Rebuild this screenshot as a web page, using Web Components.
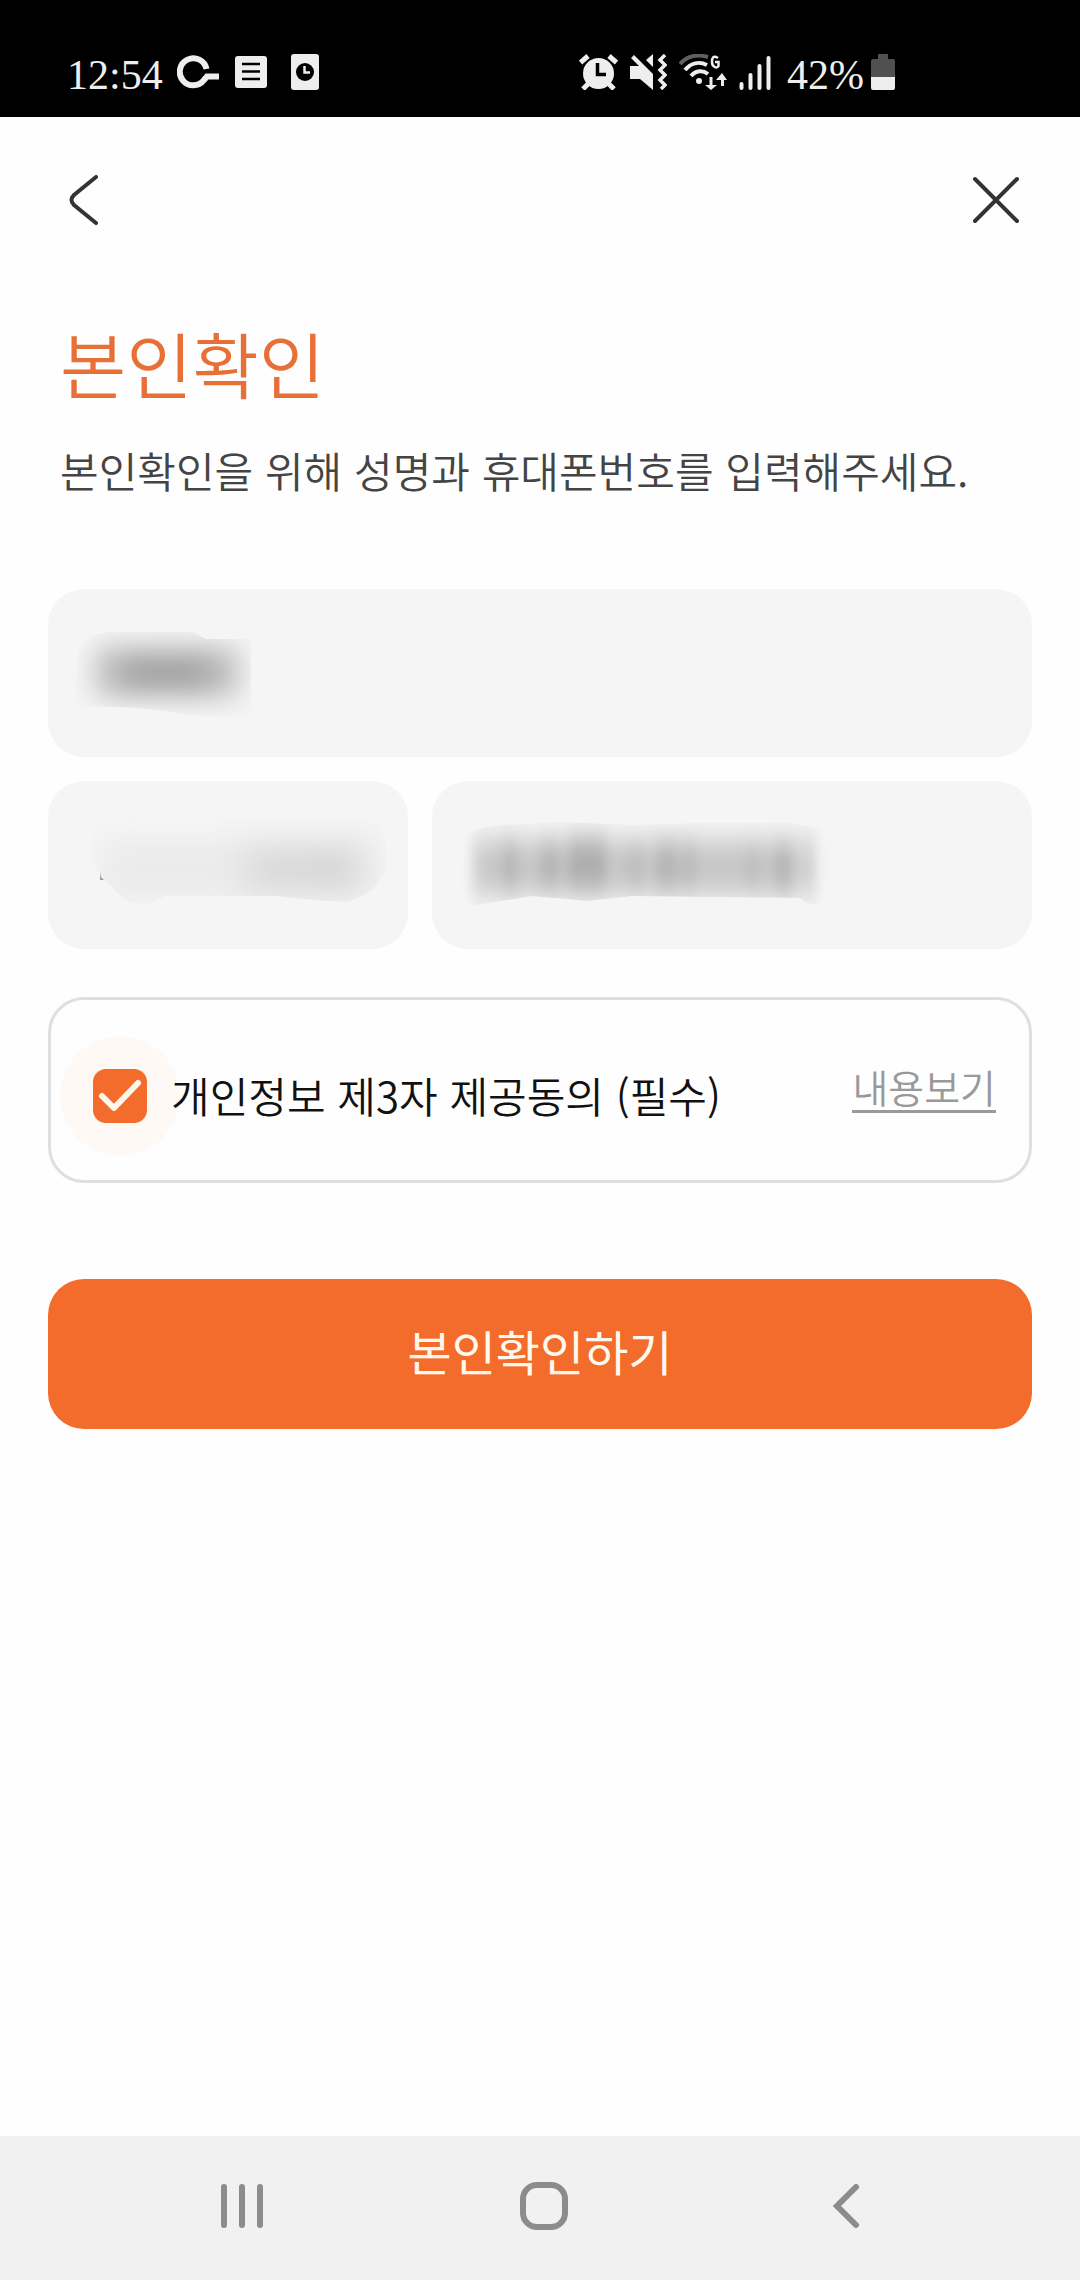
<!DOCTYPE html>
<html lang="ko">
<head>
<meta charset="utf-8">
<meta name="viewport" content="width=device-width, initial-scale=1">
<title>본인확인</title>
<style>
  html, body { margin: 0; }
  body { background: #fefefe; font-family: "Noto Sans CJK KR", sans-serif; color: #1a1a1a; }
</style>
</head>
<body>
<verify-page></verify-page>

<template id="t-status">
  <style>
    :host { display: flex; justify-content: space-between; align-items: center; box-sizing: border-box; height: 117px; padding: 27px 185px 0 67px; background: #000; color: #eee; font: 42px/44px "Liberation Serif", serif; }
    div { display: flex; align-items: center; }
    svg { display: block; height: 36px; fill: #eee; }
    span { padding-top: 6px; }
    .left { gap: 16px; }
    .left span { margin-right: -2px; }
    .right svg { margin-right: 12px; }
    .right .signal { margin-right: 16px; }
    .right svg:last-child { margin: 0 0 0 7px; }
    .dim { fill: #505050; }
    .s { fill: none; stroke: #eee; }
  </style>
  <div class="left">
    <span>12:54</span>
    <svg width="42" viewBox="0 0 42 36"><path class="s" stroke-width="6" d="M29.500 15A13.500 13.500 0 1 0 27 26L30 22.500H42"/></svg>
    <svg width="32" viewBox="0 0 32 36"><rect y="2" width="32" height="32" rx="3"/><path stroke="#000" stroke-width="2.500" d="M7 10H25M7 17.500H25M7 25H25"/></svg>
    <svg width="44" viewBox="-8 0 44 36"><rect width="28" height="36" rx="3"/><circle cx="14" cy="18" r="9" fill="#000"/><path class="s" stroke-width="2.500" d="M13.500 12V18.500H19"/></svg>
  </div>
  <div class="right">
    <svg width="39" viewBox="0 0 39 36"><circle cx="19.500" cy="19.500" r="15.500"/><path class="s" stroke-width="5" d="M1.500 8.500L9 2M37.500 8.500L30 2M9 30L4 35M30 30L35 35"/><path fill="none" stroke="#000" stroke-width="3.500" d="M18.500 9V20.500H27"/></svg>
    <svg width="37" viewBox="0 0 37 36"><path d="M0 12H10L23 24V36L10 25H0ZM23 0V13L16 6ZM4 1L23 20V26L1 4Z"/><path class="s" stroke-width="3.500" d="M35 1L30 6L35 11L30 16L35 21L30 26L35 31L31 35"/></svg>
    <svg width="48" viewBox="0 0 48 36"><path class="s" stroke-width="4" style="stroke:#606060" d="M1 10C8 2 18 0 29 3"/><path class="s" stroke-width="4" d="M6 16C12 9 20 7 28 11M12 22C17 16 24 16 29 20"/><circle cx="20" cy="27" r="3"/><path class="s" stroke-width="2.500" d="M39 4C34 1 33 4 33 8C33 13 38 15 39.500 12V8H36"/><path d="M30.500 23H33.500V31H38L32 36L26 31H30.500ZM42 32V26H37L43 19L48 26H45V32Z"/></svg>
    <svg class="signal" width="32" viewBox="0 0 32 36"><path class="s" stroke-width="4" stroke-linecap="round" d="M2.500 30V34M11.500 21V34M20.500 12V34M29.500 4V34"/></svg>
    <span>42%</span>
    <svg width="24" viewBox="0 0 24 36"><path class="dim" d="M7 0H17V5H22Q24 5 24 7V23H0V7Q0 5 2 5H7Z"/><path d="M0 23H24V34Q24 36 22 36H2Q0 36 0 34Z"/></svg>
  </div>
</template>

<template id="t-header">
  <style>
    :host { display: flex; justify-content: space-between; align-items: center; height: 168px; padding: 0 48px; }
    button { display: flex; align-items: center; justify-content: center; width: 72px; height: 96px; padding: 0 0 2px; border: 0; background: none; }
    svg { fill: none; stroke: #333; stroke-width: 4; stroke-linecap: round; }
  </style>
  <button aria-label="뒤로"><svg width="30" height="50" viewBox="0 0 30 50"><path d="M27 2L5 20Q0 25 5 30L27 48"/></svg></button>
  <button aria-label="닫기"><svg width="48" height="48" viewBox="0 0 48 48"><path d="M3 3L45 45M45 3L3 45"/></svg></button>
</template>

<template id="t-field">
  <style>
    :host { display: block; position: relative; min-width: 0; }
    input, select { display: block; box-sizing: border-box; width: 100%; height: 168px; margin: 0; padding: 0 36px; border: 0; border-radius: 36px; background: #f5f5f5; appearance: none; font: 42px/48px "Noto Sans CJK KR", sans-serif; color: #333; outline: 0; }
    ::slotted(svg) { position: absolute; left: 0; top: 0; pointer-events: none; }
  </style>
  <slot></slot>
</template>

<template id="t-consent">
  <style>
    :host { display: flex; align-items: center; justify-content: space-between; box-sizing: border-box; height: 186px; padding: 12px 33px 0 9px; border: 3px solid #dfdfdf; border-radius: 36px; }
    label { display: flex; align-items: center; gap: 24px; padding: 0 33px; font-size: 42px; line-height: 60px; font-weight: 350; color: #111; }
    .box { display: flex; flex: none; width: 54px; height: 54px; border-radius: 50%; box-shadow: 0 0 0 33px #fff9f6; background: #fff9f6; }
    input { appearance: none; width: 54px; height: 54px; margin: 0; border-radius: 13px; background: #fff; border: 3px solid #dfdfdf; }
    input:checked { border: 0; background: #f36c2b; }
    svg { position: absolute; width: 54px; height: 54px; fill: none; stroke: #fff6ec; stroke-width: 6; stroke-linecap: round; stroke-linejoin: round; pointer-events: none; }
    .text { position: relative; padding-bottom: 2px; }
    a { font-size: 39px; line-height: 48px; margin-bottom: 18px; font-weight: 350; color: #999; text-decoration: none; border-bottom: 3px solid #999; }
  </style>
  <label><span class="box"><input type="checkbox" checked><svg viewBox="0 0 54 54"><path d="M9 27L21 39L45 14"/></svg></span><span class="text"><slot></slot></span></label>
  <a href="#">내용보기</a>
</template>

<template id="t-submit">
  <style>
    :host { display: block; }
    button { display: block; width: 100%; height: 150px; padding: 0 0 8px; border: 0; border-radius: 36px; background: #f36c2b; color: #fff8ee; font: 400 48px/72px "Noto Sans CJK KR", sans-serif; }
  </style>
  <button type="submit"><slot></slot></button>
</template>

<template id="t-nav">
  <style>
    :host { display: flex; box-sizing: border-box; height: 144px; padding: 0 83px 0 91px; background: #f1f1f1; }
    button { flex: 1; display: flex; align-items: center; justify-content: center; padding: 0 0 4px; border: 0; background: none; }
    svg { fill: none; stroke: #8c8c8c; stroke-width: 6; stroke-linecap: round; }
  </style>
  <button aria-label="최근 앱"><svg width="48" height="48" viewBox="0 0 48 48"><path d="M6 5V43M24 5V43M42 5V43"/></svg></button>
  <button aria-label="홈"><svg width="48" height="48" viewBox="0 0 48 48"><rect x="3" y="3" width="42" height="42" rx="14"/></svg></button>
  <button aria-label="이전"><svg width="48" height="48" viewBox="0 0 48 48"><path stroke-linejoin="miter" d="M34 5L15 24L34 43"/></svg></button>
</template>

<template id="t-page">
  <style>
    :host { display: flex; flex-direction: column; min-height: 100vh; }
    main { flex: 1; padding: 0 48px; }
    h1 { margin: 25px 12px 0; font-size: 72px; line-height: 104px; font-weight: 350; color: #e86f35; }
    p { margin: 26px 12px 0; font-size: 42px; line-height: 60px; font-weight: 350; color: #444; }
    form { display: flex; flex-direction: column; margin-top: 89px; gap: 24px; }
    .row { display: grid; grid-template-columns: 3fr 5fr; gap: 24px; }
    consent-row { margin-top: 24px; }
    submit-button { margin-top: 72px; }
  </style>
  <status-bar></status-bar>
  <page-header></page-header>
  <main>
    <h1>본인확인</h1>
    <p>본인확인을 위해 성명과 휴대폰번호를 입력해주세요.</p>
    <form>
      <form-field kind="text" label="성명">
        <svg width="260" height="168" viewBox="0 0 260 168">
          <defs><filter id="a" x="-30%" y="-60%" width="160%" height="220%"><feGaussianBlur stdDeviation="14 14"/></filter>
          <clipPath id="ac"><path d="M26 118L31 60Q40 45 60 43H145L158 50H203V127Q170 131 130 124Q80 116 26 118Z"/></clipPath></defs>
          <g clip-path="url(#ac)"><g filter="url(#a)"><rect x="48" y="58" width="142" height="50" fill="#bcbcbc"/><rect x="76" y="66" width="84" height="36" fill="#a2a2a2"/></g></g>
        </svg>
      </form-field>
      <div class="row">
        <form-field kind="select" label="통신사">
          <svg width="360" height="168" viewBox="0 0 360 168">
            <defs><filter id="b" x="-30%" y="-50%" width="160%" height="200%"><feGaussianBlur stdDeviation="16 14"/></filter>
            <clipPath id="bc"><path d="M54 96L42 78Q40 50 58 38H320Q338 45 338 70V90Q325 115 298 121Q260 119 230 115H116Q98 128 78 120Z"/></clipPath></defs>
            <g clip-path="url(#bc)"><g filter="url(#b)"><rect x="52" y="58" width="180" height="62" fill="#ebebeb"/><rect x="192" y="58" width="132" height="60" fill="#e1e1e1"/><rect x="216" y="76" width="34" height="26" fill="#d6d6d6"/><rect x="262" y="70" width="34" height="34" fill="#d4d4d4"/></g></g>
            <path fill="#777" d="M52 91V99H56L53 96Z" opacity=".7"/>
          </svg>
        </form-field>
        <form-field kind="tel" label="휴대폰번호">
          <svg width="480" height="168" viewBox="0 0 480 168">
            <defs><filter id="c" x="-20%" y="-60%" width="140%" height="220%"><feGaussianBlur stdDeviation="6 14"/></filter>
            <clipPath id="cc"><path d="M28 124L32 58Q40 46 70 44L130 41L200 44L270 42H360L400 50V122Q380 128 368 117L280 116L200 115L155 120L100 115L45 124Z"/></clipPath></defs>
            <g clip-path="url(#cc)"><g filter="url(#c)" fill="#b4b4b4">
              <rect x="40" y="58" width="344" height="56" fill="#d0d0d0"/>
              <rect x="52" y="62" width="310" height="48" fill="#c6c6c6"/>
              <rect x="71" y="60" width="14" height="50"/><rect x="108" y="60" width="20" height="50"/><rect x="136" y="56" width="38" height="54" fill="#adadad"/>
              <rect x="196" y="64" width="14" height="44" fill="#bababa"/><rect x="224" y="60" width="22" height="50"/><rect x="252" y="60" width="10" height="50"/>
              <rect x="314" y="66" width="14" height="44" fill="#bcbcbc"/><rect x="342" y="64" width="18" height="48"/>
            </g></g>
          </svg>
        </form-field>
      </div>
      <consent-row>개인정보 제3자 제공동의 (필수)</consent-row>
      <submit-button>본인확인하기</submit-button>
    </form>
  </main>
  <nav-bar></nav-bar>
</template>

<script>
  class TemplateElement extends HTMLElement {
    constructor() {
      super();
      const t = document.getElementById(this.constructor.template);
      this.attachShadow({ mode: "open" }).append(t.content.cloneNode(true));
    }
  }
  class StatusBar extends TemplateElement { static template = "t-status"; }
  class PageHeader extends TemplateElement { static template = "t-header"; }
  class ConsentRow extends TemplateElement { static template = "t-consent"; }
  class SubmitButton extends TemplateElement { static template = "t-submit"; }
  class NavBar extends TemplateElement { static template = "t-nav"; }
  class FormField extends TemplateElement {
    static template = "t-field";
    connectedCallback() {
      const kind = this.getAttribute("kind");
      const control = document.createElement(kind === "select" ? "select" : "input");
      if (kind !== "select") control.type = kind;
      control.setAttribute("aria-label", this.getAttribute("label"));
      this.shadowRoot.querySelector("slot").before(control);
    }
  }
  class VerifyPage extends TemplateElement { static template = "t-page"; }
  customElements.define("status-bar", StatusBar);
  customElements.define("page-header", PageHeader);
  customElements.define("form-field", FormField);
  customElements.define("consent-row", ConsentRow);
  customElements.define("submit-button", SubmitButton);
  customElements.define("nav-bar", NavBar);
  customElements.define("verify-page", VerifyPage);
</script>
</body>
</html>
